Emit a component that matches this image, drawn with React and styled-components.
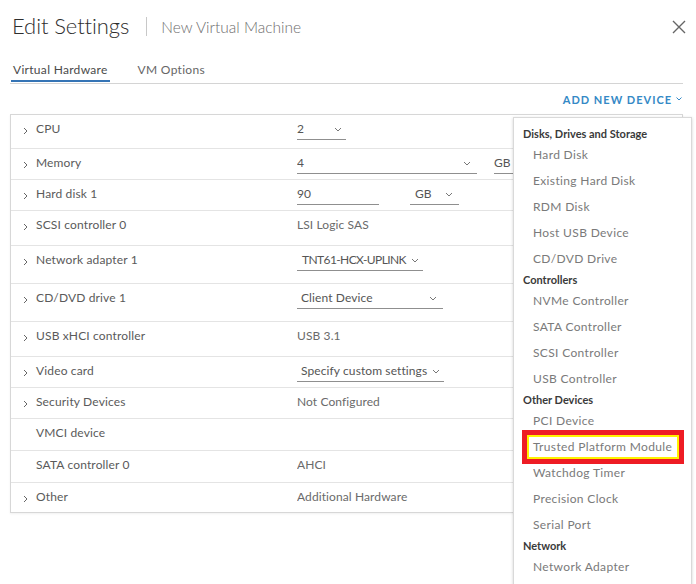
import styled, { createGlobalStyle } from "styled-components"

const GlobalStyle = createGlobalStyle`
  html, body {
    margin: 0;
    padding: 0;
    overflow: hidden;
    background: #ffffff;
  }
  body {
    font-family: Lato, "Open Sans", sans-serif;
  }
`

const Page = styled.div`
  width: 696px;
  height: 584px;
  padding: 0 13px 0 10px;
  box-sizing: border-box;
`

const Header = styled.div`
  height: 52px;
  display: flex;
  align-items: center;
  padding-left: 2px;
`

const Title = styled.h3`
  margin: 0;
  font-size: 22px;
  font-weight: 300;
  color: #2e2e2e;
  line-height: 26px;
  letter-spacing: -0.1px;
`

const Divider = styled.span`
  width: 1px;
  height: 19px;
  background: #c8c8c8;
  margin: 0 14px 0 17px;
`

const Subtitle = styled.span`
  font-size: 15.5px;
  font-weight: 300;
  color: #6e6e6e;
  margin-top: 2px;
  flex: 1;
`

const Close = styled.button`
  border: none;
  background: none;
  padding: 0;
  margin: 4px -5px 0 0;
  width: 16px;
  height: 16px;
  display: flex;
  cursor: pointer;
`

const Tabs = styled.div`
  display: flex;
  gap: 26px;
  padding-left: 1px;
  padding-bottom: 1px;
  border-bottom: 1px solid #d4d4d4;
`

const Tab = styled.div`
  height: 30px;
  box-sizing: border-box;
  padding: 11px 2px 0;
  font-size: 12px;
  line-height: 14px;
  letter-spacing: 0.3px;
  color: ${p => (p.active ? "#4a4a4a" : "#666666")};
  border-bottom: 2px solid ${p => (p.active ? "#3574b5" : "transparent")};
`

const Toolbar = styled.div`
  position: relative;
  height: 30px;
  display: flex;
  align-items: center;
  justify-content: flex-end;
`

const AddDevice = styled.button`
  border: none;
  background: none;
  padding: 0 1px 0 0;
  display: flex;
  align-items: center;
  gap: 4px;
  font-family: Lato, sans-serif;
  font-size: 11px;
  font-weight: 700;
  letter-spacing: 1px;
  color: #3489c6;
  cursor: pointer;
`

const Menu = styled.div`
  position: absolute;
  top: 33px;
  right: -9px;
  width: 179px;
  height: 480px;
  box-sizing: border-box;
  padding-top: 8px;
  background: #ffffff;
  border: 1px solid #d9d9d9;
  box-shadow: 0 1px 3px rgba(0, 0, 0, 0.18);
  z-index: 2;
`

const MenuHeader = styled.div`
  height: 16px;
  line-height: 16px;
  padding-left: 9px;
  font-size: 11px;
  font-weight: 700;
  color: #3a3a3a;
`

const MenuItem = styled.div`
  position: relative;
  height: 26px;
  line-height: 26px;
  padding-left: 19px;
  font-size: 12px;
  letter-spacing: 0.35px;
  color: #7a7a7a;
`

const Highlight = styled.span`
  position: absolute;
  top: -4px;
  left: 8px;
  width: 162px;
  height: 34px;
  box-sizing: border-box;
  border: 5px solid #ee1c24;
  box-shadow: inset 0 0 0 2px #fff200;
  pointer-events: none;
`

const Table = styled.div`
  border: 1px solid #d7d7d7;
  box-shadow: 0 1px 2px rgba(0, 0, 0, 0.06);
`

const Row = styled.div`
  display: grid;
  grid-template-columns: 286px 1fr;
  height: ${p => p.h}px;
  box-sizing: border-box;
  padding-top: 6px;
  border-bottom: ${p => (p.last ? "none" : "1px solid #e4e4e4")};
  font-size: 12px;
  line-height: 16px;
`

const Label = styled.div`
  display: flex;
  align-items: flex-start;
  padding-left: 12px;
  color: #5a5a5a;
  letter-spacing: 0.15px;
`

const Caret = styled.span`
  width: 13px;
  height: 16px;
  display: flex;
  align-items: center;
  padding-top: 3px;
  box-sizing: border-box;
`

const Value = styled.div`
  display: flex;
  align-items: flex-start;
  gap: ${p => p.gap || 0}px;
  color: #6a6a6a;
  letter-spacing: 0.1px;
  white-space: nowrap;
  overflow: hidden;
`

const Select = styled.div`
  width: ${p => p.w}px;
  height: 19px;
  box-sizing: border-box;
  display: flex;
  align-items: flex-start;
  justify-content: space-between;
  padding: 0 ${p => p.pr || 5}px 0 ${p => p.pl || 0}px;
  border-bottom: 1px solid #8f8f8f;
  color: #555555;
  letter-spacing: ${p => p.ls || 0.1}px;
  flex-shrink: 0;
`

const Down = () => (
  <svg width="8" height="16" viewBox="0 0 8 16">
    <polyline points="1,7 4,10 7,7" fill="none" stroke="#777" strokeWidth="1" />
  </svg>
)

const Right = () => (
  <svg width="5" height="8" viewBox="0 0 5 8">
    <polyline points="1,1 4,4 1,7" fill="none" stroke="#666" strokeWidth="1" />
  </svg>
)

const rows = [
  { label: "CPU", h: 34, value: <Select w={49} pr={4}>2<Down /></Select> },
  {
    label: "Memory",
    h: 31,
    gap: 17,
    value: (
      <>
        <Select w={180} pr={6}>4<Down /></Select>
        <Select w={60}>GB<Down /></Select>
      </>
    ),
  },
  {
    label: "Hard disk 1",
    h: 31,
    gap: 31,
    value: (
      <>
        <Select w={82}>90</Select>
        <Select w={49} pl={5} pr={6}>GB<Down /></Select>
      </>
    ),
  },
  { label: "SCSI controller 0", h: 35, value: "LSI Logic SAS" },
  {
    label: "Network adapter 1",
    h: 38,
    value: <Select w={126} pl={5} pr={4} ls={-0.6}>TNT61-HCX-UPLINK<Down /></Select>,
  },
  { label: "CD/DVD drive 1", h: 38, value: <Select w={146} pl={4} pr={6}>Client Device<Down /></Select> },
  { label: "USB xHCI controller", h: 35, value: "USB 3.1" },
  { label: "Video card", h: 31, value: <Select w={147} pl={4} pr={4}>Specify custom settings<Down /></Select> },
  { label: "Security Devices", h: 31, value: "Not Configured" },
  { label: "VMCI device", h: 32, noCaret: true, value: "" },
  { label: "SATA controller 0", h: 32, noCaret: true, value: "AHCI" },
  { label: "Other", h: 29, last: true, value: "Additional Hardware" },
]

const menu = [
  { header: "Disks, Drives and Storage" },
  "Hard Disk",
  "Existing Hard Disk",
  "RDM Disk",
  "Host USB Device",
  "CD/DVD Drive",
  { header: "Controllers" },
  "NVMe Controller",
  "SATA Controller",
  "SCSI Controller",
  "USB Controller",
  { header: "Other Devices" },
  "PCI Device",
  "Trusted Platform Module",
  "Watchdog Timer",
  "Precision Clock",
  "Serial Port",
  { header: "Network" },
  "Network Adapter",
]

export default function App() {
  return (
    <Page>
      <GlobalStyle />
      <Header>
        <Title>Edit Settings</Title>
        <Divider />
        <Subtitle>New Virtual Machine</Subtitle>
        <Close aria-label="Close">
          <svg width="14" height="14" viewBox="0 0 14 14">
            <path d="M1 1 L13 13 M13 1 L1 13" stroke="#666" strokeWidth="1.4" />
          </svg>
        </Close>
      </Header>
      <Tabs>
        <Tab active>Virtual Hardware</Tab>
        <Tab>VM Options</Tab>
      </Tabs>
      <Toolbar>
        <AddDevice>
          ADD NEW DEVICE
          <svg width="6" height="4" viewBox="0 0 6 4">
            <polyline points="0.5,0.5 3,3 5.5,0.5" fill="none" stroke="#3489c6" strokeWidth="1" />
          </svg>
        </AddDevice>
        <Menu>
          {menu.map((m, i) =>
            typeof m === "string" ? (
              <MenuItem key={i}>
                {m}
                {m === "Trusted Platform Module" && <Highlight />}
              </MenuItem>
            ) : (
              <MenuHeader key={i}>{m.header}</MenuHeader>
            )
          )}
        </Menu>
      </Toolbar>
      <Table>
        {rows.map(r => (
          <Row key={r.label} h={r.h} last={r.last}>
            <Label>
              <Caret>{!r.noCaret && <Right />}</Caret>
              {r.label}
            </Label>
            <Value gap={r.gap}>{r.value}</Value>
          </Row>
        ))}
      </Table>
    </Page>
  )
}
